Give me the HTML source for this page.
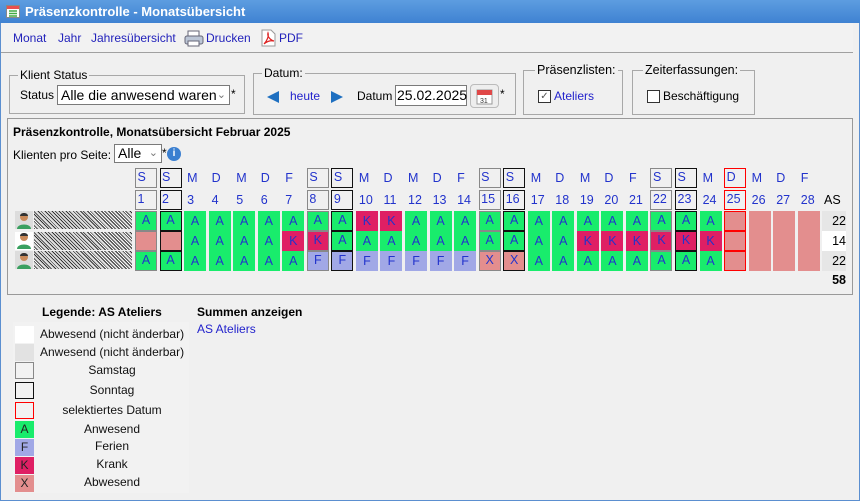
<!DOCTYPE html>
<html><head><meta charset="utf-8"><style>
*{box-sizing:border-box}
body{margin:0;width:860px;height:501px;overflow:hidden;font-family:"Liberation Sans",Arial,sans-serif;font-size:12px;background:#f0f0f0;position:relative}
.abs{position:absolute}
.win{position:absolute;left:0;top:0;width:860px;height:501px;border:1px solid #5b8fd0;background:#f0f0f0}
.title{position:absolute;left:0;top:0;width:860px;height:23px;background:linear-gradient(#5d9de0,#3f82d2);color:#fff;font-weight:bold;font-size:13px;line-height:23px;padding-left:25px}
.tb{position:absolute;left:1px;top:23px;width:852px;height:30px;background:#f2f2f2;border-bottom:1px solid #a0a0a0}
.tb span{position:absolute;top:8px;color:#2222bb;font-size:12px}
.fs{position:absolute;border:1px solid #a8a8a8;}
.lg{position:absolute;background:#f0f0f0;padding:0 2px;top:-8px;font-size:12px}
a,.lnk{color:#2222cc}
.row{position:absolute;left:135px;display:flex;gap:2.56px}
.c{width:22px;height:20px;flex:none;text-align:center;line-height:20px;font-size:12.5px;color:#2233cc}
.h{text-align:left;padding-left:3px}
.sa{border:1.5px solid #888;line-height:17px}
.su{border:1.5px solid #111;line-height:17px}
.se{border:1.5px solid #f00;line-height:17px}
.h.sa,.h.su,.h.se{padding-left:1.5px}
.A{background:#19ec6c}.K{background:#df1f64}.F{background:#a1a8e6}.X{background:#e38e8e}.P{background:#e38e8e}
.noise{position:absolute;left:34px;width:98px;height:18px;background:
repeating-linear-gradient(45deg,#111 0 1px,#fff 1px 2px,#333 2px 3px,#ddd 3px 5px),#888;opacity:.85}
.av{position:absolute;left:15px;width:18px;height:18px;background:#ddd}
.t{position:absolute;font-size:12px;color:#111}
.tc{left:36px;width:152px;text-align:center}
.sw{position:absolute;left:15px;width:19px;height:17px;text-align:center;line-height:17px;font-size:12px;color:#222}
</style></head><body>
<div class="win"></div>
<div class="title">Präsenzkontrolle - Monatsübersicht</div>
<svg class="abs" style="left:6px;top:5px" width="14" height="13"><rect x="0.5" y="0.5" width="13" height="12" fill="#fff" stroke="#888"/><rect x="1" y="1" width="12" height="3" fill="#e85050"/><path d="M3 6h8M3 8.5h8M3 11h8" stroke="#4a4" stroke-width="1.4"/></svg>
<div class="tb">
<span style="left:12px">Monat</span><span style="left:57px">Jahr</span><span style="left:90px">Jahresübersicht</span>
<svg class="abs" style="left:183px;top:7px" width="20" height="17"><rect x="4" y="1" width="11" height="6" fill="#fff" stroke="#667"/><rect x="1" y="6" width="18" height="8" rx="2" fill="#bcc6d6" stroke="#667"/><rect x="4" y="11" width="11" height="5" fill="#fff" stroke="#667"/></svg>
<span style="left:205px">Drucken</span>
<svg class="abs" style="left:259px;top:6px" width="16" height="18"><path d="M2 1h9l4 4v12H2z" fill="#fff" stroke="#999"/><path d="M4 15c3-3 5-8 4-11-1 3 2 7 6 8-4-1-8 1-10 3z" fill="none" stroke="#d22" stroke-width="1.2"/></svg>
<span style="left:278px">PDF</span>
</div>

<div class="fs" style="left:9px;top:75px;width:236px;height:39px"><span class="lg" style="left:8px">Klient Status</span></div>
<div class="abs" style="left:20px;top:88px">Status</div>
<div class="abs" style="left:57px;top:85px;width:173px;height:20px;border:1px solid #7a7a7a;background:#fff;font-size:14px;line-height:18px;padding-left:3px">Alle die anwesend waren <span style="position:absolute;right:3px;top:0;color:#777;font-size:11px">&#8964;</span></div>
<div class="abs" style="left:231px;top:87px">*</div>

<div class="fs" style="left:253px;top:73px;width:263px;height:42px"><span class="lg" style="left:8px">Datum:</span></div>
<svg class="abs" style="left:266px;top:90px" width="14" height="14"><path d="M1 7L13 1v12z" fill="#1e6fc0"/></svg>
<div class="abs lnk" style="left:290px;top:89px">heute</div>
<svg class="abs" style="left:330px;top:90px" width="14" height="14"><path d="M13 7L1 1v12z" fill="#1e6fc0"/></svg>
<div class="abs" style="left:357px;top:89px">Datum</div>
<div class="abs" style="left:395px;top:85px;width:72px;height:21px;border:1px solid #7a7a7a;background:#fff;font-size:14px;line-height:19px;padding-left:1px">25.02.2025</div>
<div class="abs" style="left:470px;top:84px;width:29px;height:24px;border:1px solid #bbb;border-radius:4px;background:#eee"></div>
<svg class="abs" style="left:476px;top:88px" width="17" height="17"><rect x="1" y="2" width="15" height="14" fill="#fff" stroke="#999"/><rect x="1" y="2" width="15" height="5" fill="#e04848"/><text x="4" y="15" font-size="7" fill="#333" font-family="Liberation Sans">31</text></svg>
<div class="abs" style="left:500px;top:87px">*</div>

<div class="fs" style="left:523px;top:70px;width:100px;height:45px"><span class="lg" style="left:11px;font-size:12.5px">Präsenzlisten:</span></div>
<div class="abs" style="left:538px;top:90px;width:13px;height:13px;border:1px solid #333;background:#fff;font-size:10px;line-height:11px;text-align:center;color:#555">✓</div>
<div class="abs lnk" style="left:554px;top:89px">Ateliers</div>
<div class="fs" style="left:632px;top:70px;width:123px;height:45px"><span class="lg" style="left:10px;font-size:12.5px">Zeiterfassungen:</span></div>
<div class="abs" style="left:647px;top:90px;width:13px;height:13px;border:1px solid #333;background:#fff"></div>
<div class="abs" style="left:663px;top:89px">Beschäftigung</div>

<div class="fs" style="left:7px;top:118px;width:846px;height:177px;border-color:#999"></div>
<div class="abs" style="left:13px;top:125px;font-weight:bold">Präsenzkontrolle, Monatsübersicht Februar 2025</div>
<div class="abs" style="left:13px;top:148px">Klienten pro Seite:</div>
<div class="abs" style="left:114px;top:144px;width:48px;height:19px;border:1px solid #7a7a7a;background:#fff;font-size:14px;line-height:17px;padding-left:3px">Alle<span style="position:absolute;right:3px;top:0;color:#777;font-size:11px">&#8964;</span></div>
<div class="abs" style="left:162px;top:146px">*</div>
<div class="abs" style="left:167px;top:147px;width:14px;height:14px;border-radius:50%;background:#3a7fd0;color:#fff;font-size:10px;font-weight:bold;text-align:center;line-height:14px">i</div>

<div class="row" style="top:168px">
<div class="c h sa">S</div><div class="c h su">S</div><div class="c h">M</div><div class="c h">D</div><div class="c h">M</div><div class="c h">D</div><div class="c h">F</div><div class="c h sa">S</div><div class="c h su">S</div><div class="c h">M</div><div class="c h">D</div><div class="c h">M</div><div class="c h">D</div><div class="c h">F</div><div class="c h sa">S</div><div class="c h su">S</div><div class="c h">M</div><div class="c h">D</div><div class="c h">M</div><div class="c h">D</div><div class="c h">F</div><div class="c h sa">S</div><div class="c h su">S</div><div class="c h">M</div><div class="c h se">D</div><div class="c h">M</div><div class="c h">D</div><div class="c h">F</div>
</div>
<div class="row" style="top:190px">
<div class="c h sa">1</div><div class="c h su">2</div><div class="c h">3</div><div class="c h">4</div><div class="c h">5</div><div class="c h">6</div><div class="c h">7</div><div class="c h sa">8</div><div class="c h su">9</div><div class="c h">10</div><div class="c h">11</div><div class="c h">12</div><div class="c h">13</div><div class="c h">14</div><div class="c h sa">15</div><div class="c h su">16</div><div class="c h">17</div><div class="c h">18</div><div class="c h">19</div><div class="c h">20</div><div class="c h">21</div><div class="c h sa">22</div><div class="c h su">23</div><div class="c h">24</div><div class="c h se">25</div><div class="c h">26</div><div class="c h">27</div><div class="c h">28</div>
</div>
<div class="abs" style="left:824px;top:193px;font-size:12.5px">AS</div>

<div class="av" style="top:211px"></div><div class="noise" style="top:211px"></div>
<div class="av" style="top:232px;background:#fff"></div><div class="noise" style="top:232px"></div>
<div class="av" style="top:251px"></div><div class="noise" style="top:251px"></div>
<svg class="abs" style="left:15px;top:211px" width="18" height="60"><g id="p"><circle cx="9" cy="6" r="4" fill="#c98a5a"/><path d="M5 5c0-4 8-4 8 0" fill="#333"/><path d="M2 18c0-6 14-6 14 0z" fill="#3aa060"/></g><use href="#p" y="20"/><use href="#p" y="40"/></svg>

<div class="row" style="top:211px">
<div class="c A sa">A</div><div class="c A su">A</div><div class="c A">A</div><div class="c A">A</div><div class="c A">A</div><div class="c A">A</div><div class="c A">A</div><div class="c A sa">A</div><div class="c A su">A</div><div class="c K">K</div><div class="c K">K</div><div class="c A">A</div><div class="c A">A</div><div class="c A">A</div><div class="c A sa">A</div><div class="c A su">A</div><div class="c A">A</div><div class="c A">A</div><div class="c A">A</div><div class="c A">A</div><div class="c A">A</div><div class="c A sa">A</div><div class="c A su">A</div><div class="c A">A</div><div class="c P se"></div><div class="c P"></div><div class="c P"></div><div class="c P"></div>
</div>
<div class="row" style="top:231px">
<div class="c P sa"></div><div class="c P su"></div><div class="c A">A</div><div class="c A">A</div><div class="c A">A</div><div class="c A">A</div><div class="c K">K</div><div class="c K sa">K</div><div class="c A su">A</div><div class="c A">A</div><div class="c A">A</div><div class="c A">A</div><div class="c A">A</div><div class="c A">A</div><div class="c A sa">A</div><div class="c A su">A</div><div class="c A">A</div><div class="c A">A</div><div class="c K">K</div><div class="c K">K</div><div class="c K">K</div><div class="c K sa">K</div><div class="c K su">K</div><div class="c K">K</div><div class="c P se"></div><div class="c P"></div><div class="c P"></div><div class="c P"></div>
</div>
<div class="row" style="top:251px">
<div class="c A sa">A</div><div class="c A su">A</div><div class="c A">A</div><div class="c A">A</div><div class="c A">A</div><div class="c A">A</div><div class="c A">A</div><div class="c F sa">F</div><div class="c F su">F</div><div class="c F">F</div><div class="c F">F</div><div class="c F">F</div><div class="c F">F</div><div class="c F">F</div><div class="c X sa">X</div><div class="c X su">X</div><div class="c A">A</div><div class="c A">A</div><div class="c A">A</div><div class="c A">A</div><div class="c A">A</div><div class="c A sa">A</div><div class="c A su">A</div><div class="c A">A</div><div class="c P se"></div><div class="c P"></div><div class="c P"></div><div class="c P"></div>
</div>
<div class="abs" style="left:822px;top:211px;width:24px;height:20px;background:#e6e6e6;text-align:right;line-height:20px;font-size:12.5px">22</div>
<div class="abs" style="left:822px;top:231px;width:24px;height:20px;background:#fff;text-align:right;line-height:20px;font-size:12.5px">14</div>
<div class="abs" style="left:822px;top:251px;width:24px;height:20px;background:#e6e6e6;text-align:right;line-height:20px;font-size:12.5px">22</div>
<div class="abs" style="left:822px;top:273px;width:24px;text-align:right;font-weight:bold;font-size:12.5px">58</div>

<div class="abs" style="left:13px;top:322px;width:176px;height:171px;background:#f2f2f2"></div>
<div class="abs" style="left:42px;top:305px;font-weight:bold">Legende: AS Ateliers</div>
<div class="abs" style="left:197px;top:305px;font-weight:bold">Summen anzeigen</div>
<div class="abs lnk" style="left:197px;top:322px">AS Ateliers</div>

<div class="sw" style="top:326px;background:#fff"></div><div class="t" style="left:40px;top:327px">Abwesend (nicht änderbar)</div>
<div class="sw" style="top:344px;background:#e2e2e2"></div><div class="t" style="left:40px;top:345px">Anwesend (nicht änderbar)</div>
<div class="sw" style="top:362px;border:1px solid #888"></div><div class="t tc" style="top:363px">Samstag</div>
<div class="sw" style="top:382px;border:1px solid #111"></div><div class="t tc" style="top:383px">Sonntag</div>
<div class="sw" style="top:402px;border:1px solid #f00"></div><div class="t tc" style="top:403px">selektiertes Datum</div>
<div class="sw A" style="top:421px">A</div><div class="t tc" style="top:422px">Anwesend</div>
<div class="sw F" style="top:439px">F</div><div class="t tc" style="top:439px">Ferien</div>
<div class="sw K" style="top:457px">K</div><div class="t tc" style="top:457px">Krank</div>
<div class="sw X" style="top:475px">X</div><div class="t tc" style="top:475px">Abwesend</div>
</body></html>
